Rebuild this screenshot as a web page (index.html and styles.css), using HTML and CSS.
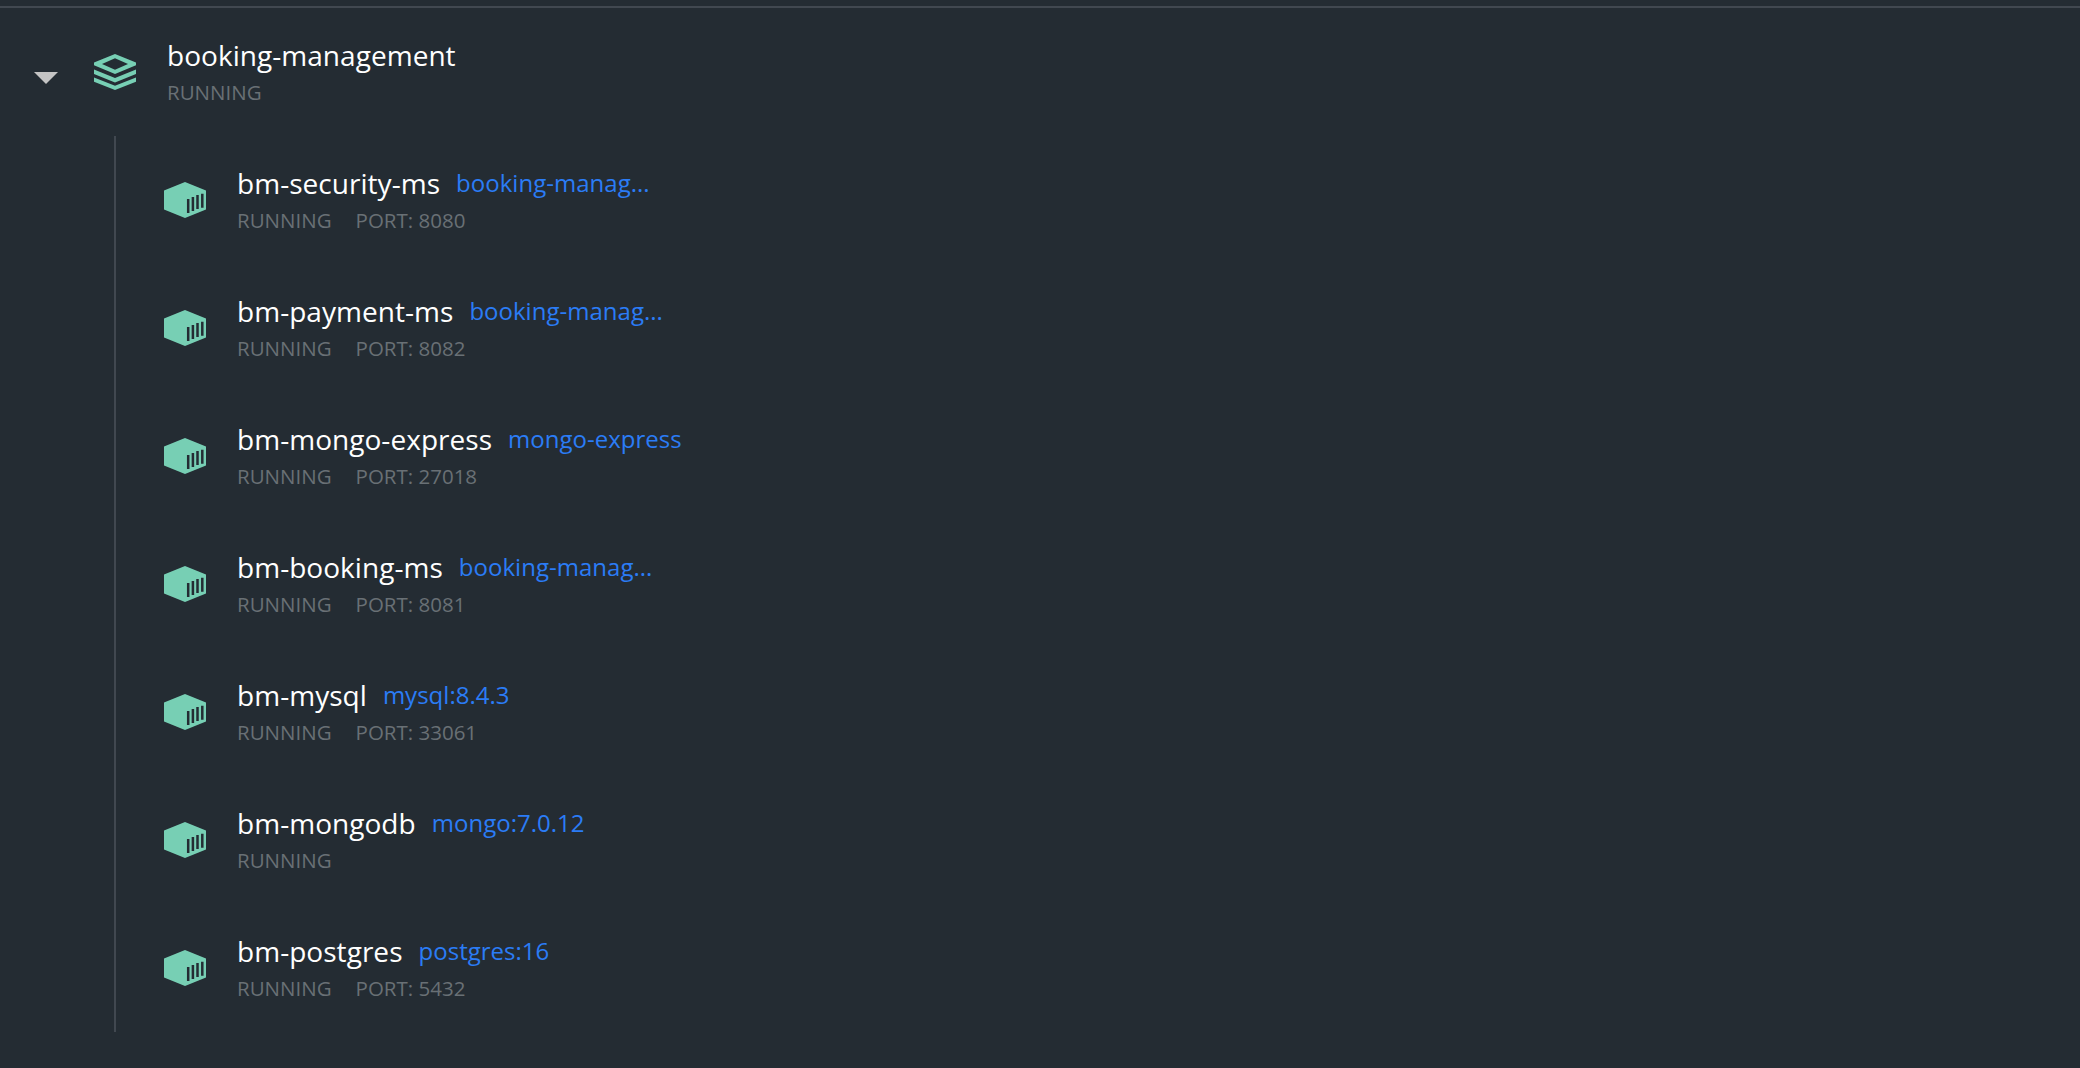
FILE: index.html
```html
<!DOCTYPE html>
<html lang="en">
<head>
<meta charset="utf-8">
<title>Containers</title>
<link rel="stylesheet" href="styles.css">
</head>
<body>
<svg class="sprite" aria-hidden="true">
  <symbol id="stack" viewBox="0 0 42 36">
    <path fill-rule="evenodd" d="M21 0L42 8.6V11.2L21 20L0 11.2V8.6ZM21 4.2L8 10L21 15.8L34 10Z"/>
    <path d="M0 15.6L21 24L42 15.6V20L21 28.4L0 20Z"/>
    <path d="M0 23.4L21 31.8L42 23.4V27.8L21 36L0 27.8Z"/>
  </symbol>
  <symbol id="container" viewBox="0 0 42 36">
    <path d="M21 0L42 8.6V27.4L21 36L0 27.4V8.6Z"/>
    <path class="slats" d="M24.2 17V31M28.9 15V29M33.5 13V27M38.3 11.7V25.7"/>
  </symbol>
</svg>
<main class="app">
  <header class="row group">
    <span class="caret"></span>
    <svg class="icon"><use href="#stack"/></svg>
    <div class="info">
      <div class="heading"><span class="name">booking-management</span></div>
      <div class="meta"><span>RUNNING</span></div>
    </div>
  </header>
  <section class="children">
    <div class="row">
      <svg class="icon"><use href="#container"/></svg>
      <div class="info">
        <div class="heading"><span class="name">bm-security-ms</span><a class="image">booking-manag...</a></div>
        <div class="meta"><span>RUNNING</span><span>PORT: 8080</span></div>
      </div>
    </div>
    <div class="row">
      <svg class="icon"><use href="#container"/></svg>
      <div class="info">
        <div class="heading"><span class="name">bm-payment-ms</span><a class="image">booking-manag...</a></div>
        <div class="meta"><span>RUNNING</span><span>PORT: 8082</span></div>
      </div>
    </div>
    <div class="row">
      <svg class="icon"><use href="#container"/></svg>
      <div class="info">
        <div class="heading"><span class="name">bm-mongo-express</span><a class="image">mongo-express</a></div>
        <div class="meta"><span>RUNNING</span><span>PORT: 27018</span></div>
      </div>
    </div>
    <div class="row">
      <svg class="icon"><use href="#container"/></svg>
      <div class="info">
        <div class="heading"><span class="name">bm-booking-ms</span><a class="image">booking-manag...</a></div>
        <div class="meta"><span>RUNNING</span><span>PORT: 8081</span></div>
      </div>
    </div>
    <div class="row">
      <svg class="icon"><use href="#container"/></svg>
      <div class="info">
        <div class="heading"><span class="name">bm-mysql</span><a class="image">mysql:8.4.3</a></div>
        <div class="meta"><span>RUNNING</span><span>PORT: 33061</span></div>
      </div>
    </div>
    <div class="row">
      <svg class="icon"><use href="#container"/></svg>
      <div class="info">
        <div class="heading"><span class="name">bm-mongodb</span><a class="image">mongo:7.0.12</a></div>
        <div class="meta"><span>RUNNING</span></div>
      </div>
    </div>
    <div class="row">
      <svg class="icon"><use href="#container"/></svg>
      <div class="info">
        <div class="heading"><span class="name">bm-postgres</span><a class="image">postgres:16</a></div>
        <div class="meta"><span>RUNNING</span><span>PORT: 5432</span></div>
      </div>
    </div>
  </section>
</main>
</body>
</html>
```

FILE: styles.css
```css
* { box-sizing: border-box; }
body {
  margin: 0;
  background: #242c33;
  font-family: "Open Sans", "Noto Sans", sans-serif;
}
.sprite { display: none; }
.app {
  height: 1068px;
  padding-top: 6px;
  overflow: hidden;
}
.row {
  display: flex;
  align-items: center;
  height: 128px;
}
.group {
  height: 130px;
  border-top: 2px solid #414850;
  padding-left: 34px;
}
.caret {
  width: 24px;
  height: 12px;
  margin: 12px 36px 0 0;
  background: #c4c4c4;
  clip-path: polygon(0 0, 100% 0, 50% 100%);
}
.icon {
  flex: none;
  width: 42px;
  height: 36px;
  margin-right: 31px;
  fill: #77cfb4;
}
.slats {
  fill: none;
  stroke: #242c33;
  stroke-width: 2.5;
}
.children {
  margin-left: 114px;
  border-left: 2px solid #414850;
}
.children .row { padding-left: 48px; }
.info { align-self: flex-start; padding-top: 27px; }
.heading {
  display: flex;
  gap: 16px;
  height: 40px;
  white-space: nowrap;
}
.name {
  color: #fff;
  font-size: 28px;
  line-height: 40px;
  letter-spacing: 0.04px;
}
.image {
  color: #2b7cf6;
  font-size: 24px;
  line-height: 39.5px;
  letter-spacing: 0.02px;
}
.meta {
  display: flex;
  gap: 24px;
  margin-top: 3px;
  color: #697075;
  font-size: 20.5px;
  line-height: 28px;
}
```
